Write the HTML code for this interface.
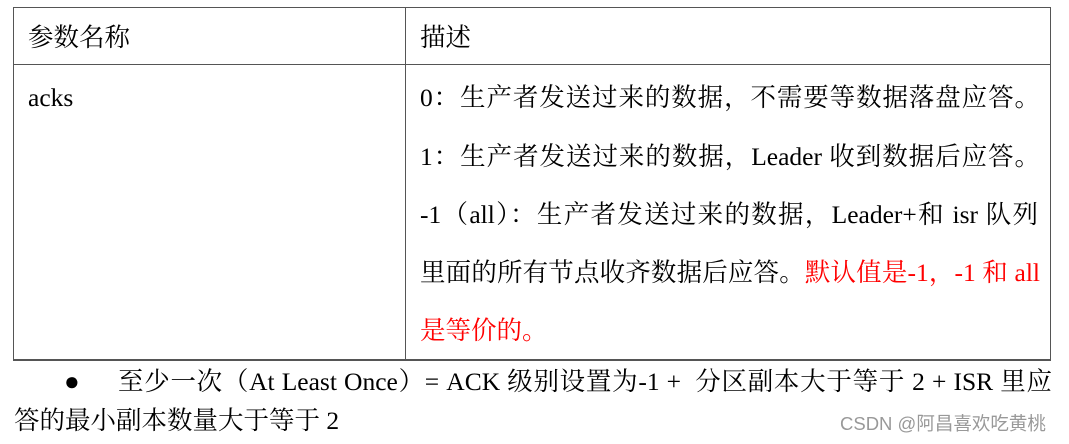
<!DOCTYPE html>
<html><head><meta charset="utf-8"><style>
body{margin:0;width:1069px;height:444px;background:#fff;position:relative;overflow:hidden;font-family:"Liberation Serif","Noto Serif CJK SC",serif;color:#000;font-size:25.5px}
.b{position:absolute;background:#555}
.l{position:absolute;height:30px;line-height:30px;white-space:nowrap}
.j{text-align:justify;text-align-last:justify}
.r{color:#f00}
</style></head><body>
<div class="b" style="left:13px;top:7px;width:1038px;height:1px"></div>
<div class="b" style="left:13px;top:64px;width:1038px;height:1px"></div>
<div class="b" style="left:13px;top:359px;width:1038px;height:2px"></div>
<div class="b" style="left:13px;top:7px;width:1px;height:353px"></div>
<div class="b" style="left:405px;top:7px;width:1px;height:353px"></div>
<div class="b" style="left:1050px;top:7px;width:1px;height:353px"></div>

<div class="l" style="left:28px;top:23px">参数名称</div>
<div class="l" style="left:420px;top:23px">描述</div>
<div class="l" style="left:28px;top:83px">acks</div>
<div class="l j" style="left:420px;top:83px;width:620px">0：生产者发送过来的数据，不需要等数据落盘应答。</div>
<div class="l j" style="left:420px;top:142px;width:620px">1：生产者发送过来的数据，Leader 收到数据后应答。</div>
<div class="l j" style="left:420px;top:200px;width:618px">-1（all）：生产者发送过来的数据，Leader+和 isr 队列</div>
<div class="l j" style="left:420px;top:258px;width:620px">里面的所有节点收齐数据后应答。<span class="r">默认值是-1，-1 和 all</span></div>
<div class="l r" style="left:420px;top:316px">是等价的。</div>

<div class="l" style="left:64px;top:367px;font-size:26px">●</div>
<div class="l j" style="left:118px;top:367px;width:934px">至少一次（At Least Once）= ACK 级别设置为-1 +&nbsp; 分区副本大于等于 2 + ISR 里应</div>
<div class="l" style="left:14px;top:406px">答的最小副本数量大于等于 2</div>
<div class="l" style="left:840px;top:409px;font-family:'Liberation Sans','Noto Sans CJK SC',sans-serif;font-size:18.5px;color:#999">CSDN @阿昌喜欢吃黄桃</div>
</body></html>
